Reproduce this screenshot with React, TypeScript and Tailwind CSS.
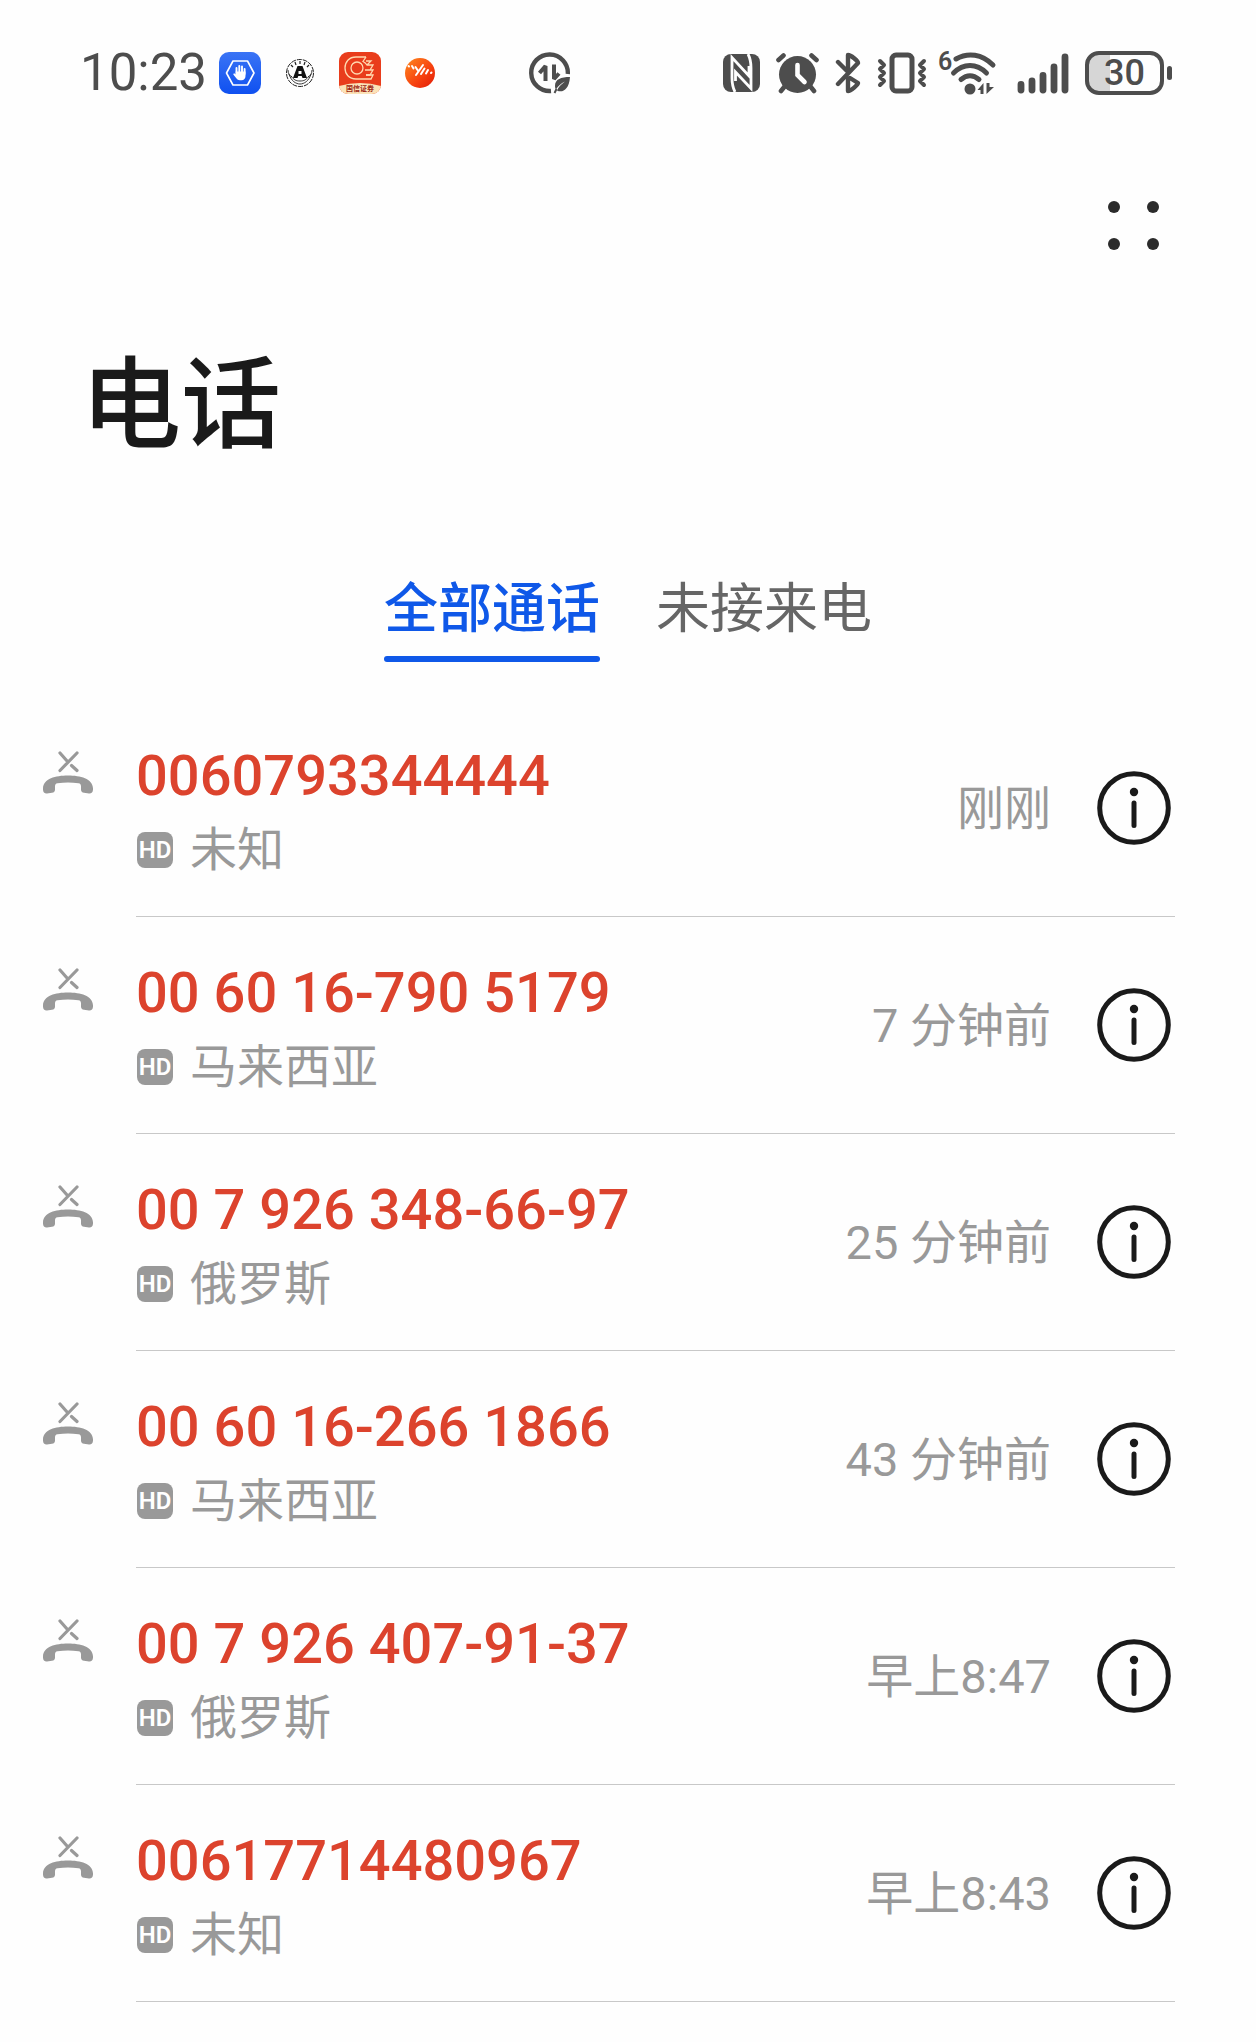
import { useState } from 'react';

type Call = { number: string; place: string; time: string };

const CALLS: Call[] = [
  { number: '0060793344444', place: '未知', time: '刚刚' },
  { number: '00 60 16-790 5179', place: '马来西亚', time: '7 分钟前' },
  { number: '00 7 926 348-66-97', place: '俄罗斯', time: '25 分钟前' },
  { number: '00 60 16-266 1866', place: '马来西亚', time: '43 分钟前' },
  { number: '00 7 926 407-91-37', place: '俄罗斯', time: '早上8:47' },
  { number: '00617714480967', place: '未知', time: '早上8:43' },
];

const TABS: string[] = ['全部通话', '未接来电'];

function NotificationIcons() {
  return (
    <div className="flex items-center gap-[18px]">
      <svg width="42" height="42" viewBox="0 0 42 42">
        <defs>
          <linearGradient id="guard" x1="0" y1="0" x2="0" y2="1">
            <stop offset="0" stopColor="#3a74f5" />
            <stop offset="1" stopColor="#0f50f0" />
          </linearGradient>
        </defs>
        <rect width="42" height="42" rx="10" fill="url(#guard)" />
        <path d="M14 9h14.500l6.500 12-6.500 12H14L7.500 21z" fill="none" stroke="#fff" strokeWidth="1.600" strokeLinejoin="round" />
        <path d="M17.500 22v-6M20.300 21v-7M23 21v-6.500M25.600 22v-5" stroke="#fff" strokeWidth="1.900" strokeLinecap="round" />
        <path d="M16.600 19.500h9.900V24c0 2.500-1.500 4.200-4 4.200h-1.700c-1.500 0-2.600-.7-3.500-2l-2.800-3.500c-.6-1 .4-1.700 1.200-1.100l1.200 1z" fill="#fff" />
      </svg>
      <svg width="42" height="42" viewBox="0 0 42 42" fill="none" stroke="#222">
        <circle cx="21" cy="21" r="13.500" strokeDasharray="5 1" />
        <path d="M12 13l2 2M16 10l1 3M21 9v3M26 10l-1 3M30 13l-2 2" strokeWidth="1.200" />
        <path d="M10 22c2 7 7 10 11 10s9-3 11-10M12 24c3 4 5 5 9 5s6-1 9-5M9 18c0 4 2 6 4 7M33 18c0 4-2 6-4 7" strokeWidth=".9" />
        <path d="M18.500 14h5L28 26h-4.500l-.8-2h-3.400l-.8 2H14z" fill="#111" stroke="none" />
        <rect x="19.500" y="19" width="3" height="3" fill="#fff" stroke="none" />
      </svg>
      <svg width="42" height="42" viewBox="0 0 42 42">
        <defs>
          <clipPath id="appShape"><rect width="42" height="42" rx="9" /></clipPath>
        </defs>
        <g clipPath="url(#appShape)">
          <rect width="42" height="42" fill="#e93d1c" />
          <path d="M0 34q21-6 42 0v8H0z" fill="#fbe3b8" />
          <g fill="none" stroke="#ffd9b0" strokeWidth="1.300">
            <path d="M27 5H17C10 5 6 10 6 16s4 11 11 11h15l2-4h-7" />
            <circle cx="18" cy="16" r="6" />
            <path d="M27 5l-3 4.500c2 1 3 2 4 3.500l4-4h-5M28 13h6l-3 5h-5M27 18h7l-3 5h-4" />
          </g>
          <text x="21" y="39" textAnchor="middle" fontSize="7" fontWeight="700" fill="#9c2412">国信证券</text>
        </g>
      </svg>
      <svg width="42" height="42" viewBox="0 0 42 42">
        <defs>
          <linearGradient id="pulse" x1="0" y1="0" x2="1" y2="1">
            <stop offset="0" stopColor="#ff8a1f" />
            <stop offset=".6" stopColor="#f6400f" />
            <stop offset="1" stopColor="#e01a08" />
          </linearGradient>
        </defs>
        <circle cx="21" cy="21" r="15" fill="url(#pulse)" />
        <path d="M9.500 14l.5.500M13 14l1.500 2.500M16.500 15l3 4.500M17 23l7-10M22 22l3.500-5.500M27 21.500l2-3.500M32 21l.5-.5" stroke="#fff" strokeWidth="2" strokeLinecap="round" />
      </svg>
    </div>
  );
}

function DataSaverIcon() {
  return (
    <svg width="42" height="42" viewBox="0 0 42 42" fill="none" stroke="#4d4d4d">
      <path d="M22 39A18.300 18.300 0 1 1 38.800 22" strokeWidth="4.400" />
      <path d="M16.500 29V14l-6 7M25 12.500v14.500l5-5.500" strokeWidth="4" strokeLinejoin="bevel" />
      <path d="M41 25c-9 0-15 2-15 9 0 1.500.4 2.500 1 3.400C29 34 32 31.500 36 29.500c-4 3-6.500 5.500-8 9 5 2.500 12 0 13-13.500z" fill="#4d4d4d" stroke="none" />
      <path d="M25.500 41l2-4" strokeWidth="2" />
    </svg>
  );
}

function SystemIcons() {
  return (
    <div className="flex items-center text-[#4d4d4d]">
      {/* nfc */}
      <svg className="mr-4" width="37" height="42" viewBox="0 0 37 42">
        <rect y="2" width="37" height="38" rx="8" fill="currentColor" />
        <path d="M12 40c-2.500-5-3-8-3-14V5.500L26 24V14M25 2c2.500 5 3 8 3 14v20.500L12.500 20v9" fill="none" stroke="#fefefe" strokeWidth="2.800" />
      </svg>
      {/* alarm */}
      <svg className="mr-4" width="43" height="42" viewBox="0 0 43 42" fill="none" stroke="currentColor" strokeLinecap="round">
        <circle cx="21.500" cy="22.500" r="18.500" fill="currentColor" stroke="none" />
        <path d="M2.500 8l5-4.500M40.500 8l-5-4.500M9 34l-4 5M34 34l4 5" strokeWidth="4.600" />
        <path d="M21.500 13v10l7 7" stroke="#fefefe" strokeWidth="4.600" />
      </svg>
      {/* bluetooth */}
      <svg className="mr-4" width="26" height="42" viewBox="0 0 26 42" fill="none" stroke="currentColor" strokeWidth="4.400" strokeLinecap="round" strokeLinejoin="round">
        <path d="M3 10l10 10V3c3 0 10 6 10 8L3 32M15 26l8 5c0 1.500-7 8-10 8V27" />
      </svg>
      {/* vibrate */}
      <svg className="mr-3" width="50" height="42" viewBox="0 0 50 42" fill="none" stroke="currentColor" strokeLinecap="round" strokeLinejoin="round">
        <rect x="15" y="3" width="20" height="36" rx="4" strokeWidth="5" />
        <path d="M3 9l4 4-4 4 4 4-4 4 4 4-4 4M47 9l-4 4 4 4-4 4 4 4-4 4 4 4" strokeWidth="4" />
      </svg>
      {/* wifi 6 */}
      <svg className="mr-5 overflow-visible" width="58" height="44" viewBox="0 0 58 44" fill="none" stroke="currentColor">
        <text x="-1" y="19" fontSize="25" fontWeight="600" fill="currentColor" stroke="none">6</text>
        <path d="M17 8C29 1 43 3 54 14M14.500 22c10-10 23-10 33 0M22 28.500c6-5 12-5 18 0" strokeWidth="5" strokeLinecap="round" />
        <circle cx="31" cy="38" r="5.500" fill="currentColor" stroke="none" />
        <path d="M38.500 39l6-7v11h-3v-4zM47.500 32h3v4h4.500l-7.500 7z" fill="currentColor" stroke="none" />
      </svg>
      {/* signal */}
      <svg className="mr-4" width="52" height="42" viewBox="0 0 52 42" fill="none" stroke="currentColor" strokeWidth="6.800" strokeLinecap="round">
        <path d="M4 32.500v5.500M15 29v9M26 23.500v14.500M37 15v23M48 5v33" />
      </svg>
      {/* battery */}
      <div className="flex h-11 w-[79px] items-center justify-center rounded-[14px] border-4 border-[#4d4d4d] bg-linear-to-r from-[#d6d6d6] from-[30%] to-transparent to-[30%] text-[36px] leading-9 font-medium">
        30
      </div>
      <div className="ml-[3px] h-[14px] w-[5px] rounded-full bg-[#4d4d4d]" />
    </div>
  );
}

function RejectedCallIcon() {
  return (
    <svg className="mt-[51px] shrink-0" width="50" height="43" viewBox="0 0 50 43" fill="none" stroke="#999">
      <path d="M17 2l7.500 8.500M34 2L17 19.500M28.500 14.500l5.500 5" strokeWidth="3.200" strokeLinecap="round" />
      <path d="M0 38.500C-.5 28 12 24.500 25 24.500S50.500 28 50 38.500c0 3-1.500 4-4 3.900l-5-.6c-2-.3-3-1.300-3-3.300v-3c0-2-.7-3-2.500-3.300-7-.9-14-.9-21 0-1.800.3-2.500 1.300-2.500 3.300v3c0 2-1 3-3 3.300l-5 .6c-2.500.1-4-.9-4-3.900z" fill="#999" stroke="none" />
    </svg>
  );
}

function InfoIcon() {
  return (
    <svg width="74" height="74" viewBox="0 0 74 74">
      <circle cx="37" cy="37" r="34.300" fill="none" stroke="#1a1a1a" strokeWidth="5" />
      <circle cx="37" cy="21" r="4.200" fill="#1a1a1a" />
      <path d="M37 32v22.500" stroke="#1a1a1a" strokeWidth="5" strokeLinecap="round" />
    </svg>
  );
}

function CallRow({ call }: { call: Call }) {
  return (
    <li className="flex gap-[43px] pr-[81px] pl-[43px]">
      <RejectedCallIcon />
      <div className="flex min-w-0 flex-1 items-center border-b border-[#c8c8c8]">
        <div className="flex-1 pt-10 pb-7">
          <div className="text-[56px] leading-[72px] font-medium text-[#dc432d]">{call.number}</div>
          <div className="flex items-center gap-[17px] text-[47px] leading-[76px] text-[#999]">
            <span className="ml-px flex h-9 w-9 items-center justify-center rounded-lg bg-[#999] text-[24px] leading-none font-semibold text-white">HD</span>
            <span>{call.place}</span>
          </div>
        </div>
        <time className="pt-[2px] text-[47px] leading-[72px] text-[#999]">{call.time}</time>
        <button aria-label={`${call.number} 详情`} className="mr-1 ml-[46px]">
          <InfoIcon />
        </button>
      </div>
    </li>
  );
}

export default function App() {
  const [tab, setTab] = useState(0);

  return (
    <div className="min-h-screen bg-[#fefefe] pb-10 font-[Roboto,'Noto_Sans_CJK_SC',sans-serif] text-[#1a1a1a]">
      <header className="flex items-center pt-[37px] pr-[84px] pb-[35px] pl-20">
        <span className="mr-3 text-[51px] leading-[72px] text-[#4d4d4d]">10:23</span>
        <NotificationIcons />
        <div className="mr-auto ml-[88px]"><DataSaverIcon /></div>
        <SystemIcons />
      </header>

      <div className="mt-[57px] flex justify-end pr-[97px]">
        <button aria-label="更多">
          <svg width="51" height="49" viewBox="0 0 51 49" fill="#2b2b2b">
            <circle cx="6" cy="6" r="6" />
            <circle cx="45" cy="6" r="6" />
            <circle cx="6" cy="43" r="6" />
            <circle cx="45" cy="43" r="6" />
          </svg>
        </button>
      </div>

      <h1 className="mt-[100px] pl-[81px] text-[100px] leading-[112px] font-medium">电话</h1>

      <div role="tablist" className="mt-28 flex justify-center gap-14 text-[54px] leading-[72px]">
        {TABS.map((label, i) => (
          <button
            key={label}
            role="tab"
            aria-selected={tab === i}
            onClick={() => setTab(i)}
            className={tab === i ? 'font-medium text-[#0f58e8]' : 'text-[#666]'}
          >
            {label}
            <div className={tab === i ? 'mt-[10px] h-[6px] rounded-full bg-[#0f58e8]' : 'mt-[10px] h-[6px]'} />
          </button>
        ))}
      </div>

      <ul className="mt-[38px]">
        {CALLS.map(call => (
          <CallRow key={call.number} call={call} />
        ))}
      </ul>
    </div>
  );
}
